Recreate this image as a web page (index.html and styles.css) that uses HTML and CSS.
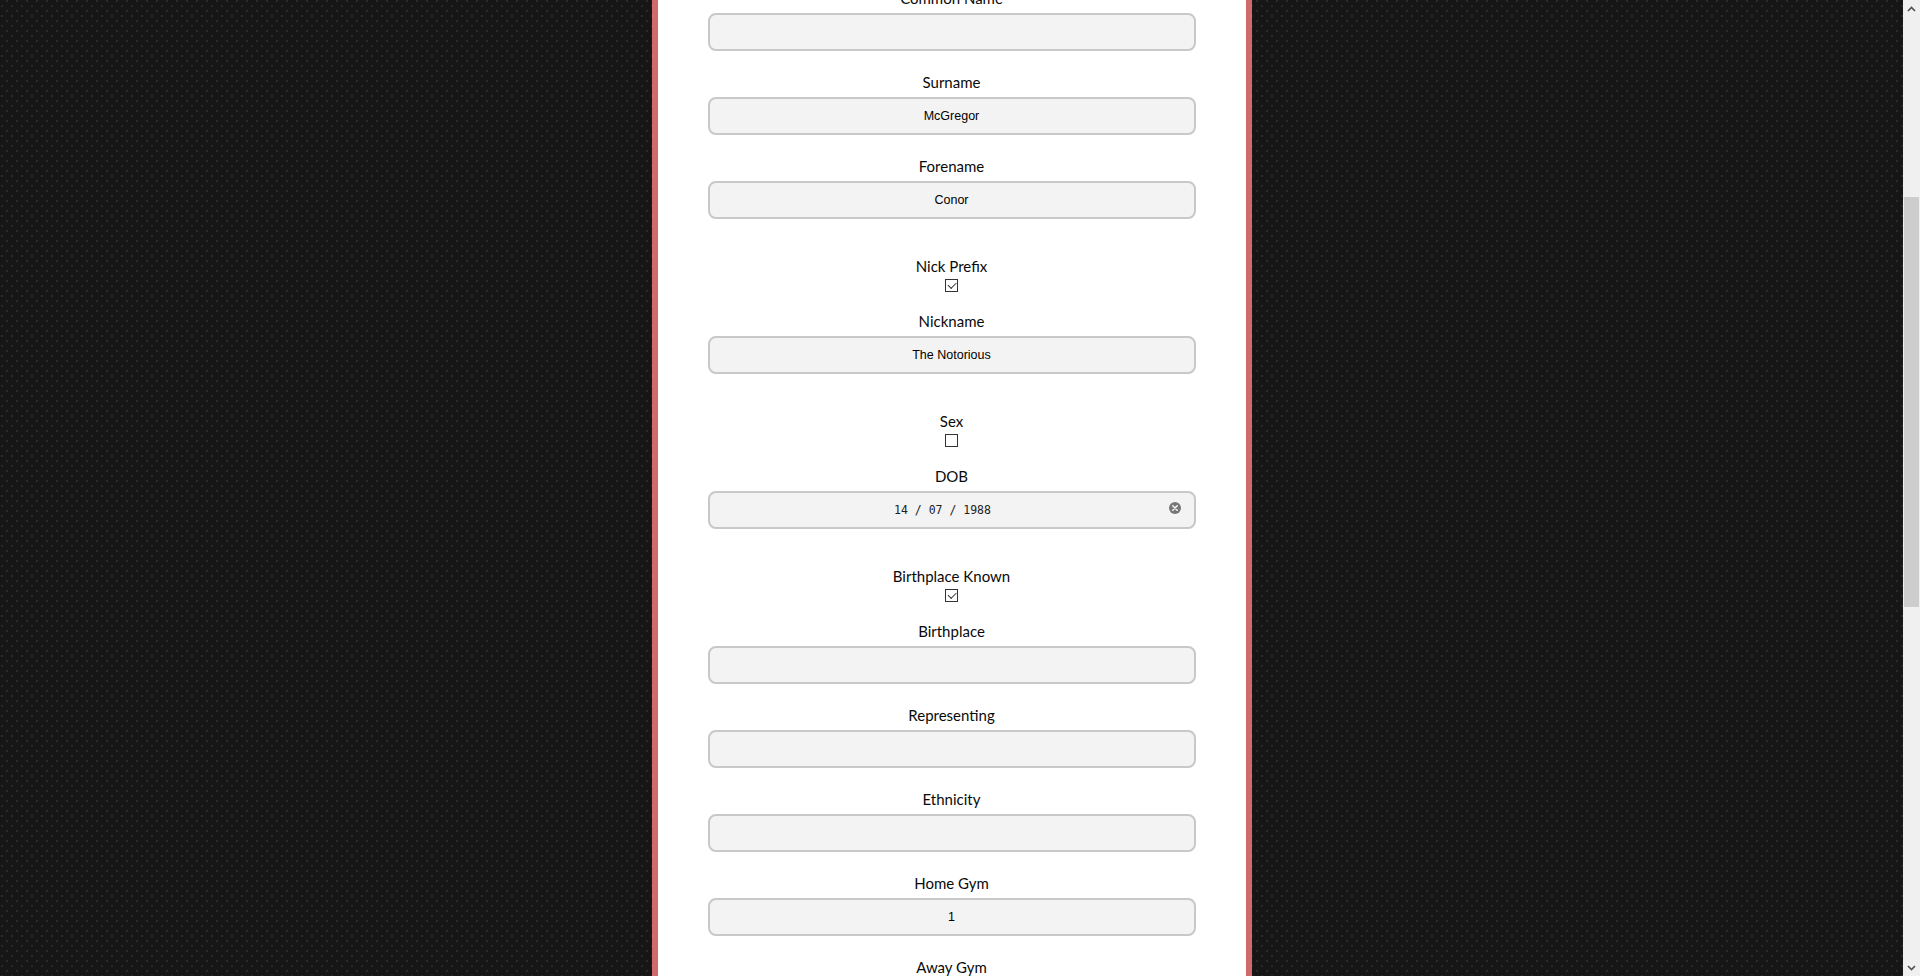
FILE: index.html
```html
<!DOCTYPE html>
<html lang="en">
<head>
<meta charset="utf-8">
<title>Edit Fighter</title>
<link rel="stylesheet" href="styles.css">
</head>
<body>
<main class="panel">
  <h2 class="panel-title">Edit Fighter</h2>
  <form class="form">
    <div class="field"><label class="field-label" for="f-id">ID</label><input class="field-input" id="f-id" type="text" value="1"></div>
    <div class="field"><label class="field-label" for="f-full">Full Name</label><input class="field-input" id="f-full" type="text" value="Conor McGregor"></div>
    <div class="field"><label class="field-label" for="f-fight">Fight Name</label><input class="field-input" id="f-fight" type="text"></div>
    <div class="field"><label class="field-label" for="f-short">Short Name</label><input class="field-input" id="f-short" type="text"></div>
    <div class="field"><label class="field-label" for="f-common">Common Name</label><input class="field-input" id="f-common" type="text"></div>
    <div class="field"><label class="field-label" for="f-surname">Surname</label><input class="field-input" id="f-surname" type="text" value="McGregor"></div>
    <div class="field"><label class="field-label" for="f-forename">Forename</label><input class="field-input" id="f-forename" type="text" value="Conor"></div>
    <div class="field field-check"><label class="field-label" for="f-nickprefix">Nick Prefix</label><input class="check-box" id="f-nickprefix" type="checkbox" checked></div>
    <div class="field"><label class="field-label" for="f-nickname">Nickname</label><input class="field-input" id="f-nickname" type="text" value="The Notorious"></div>
    <div class="field field-check"><label class="field-label" for="f-sex">Sex</label><input class="check-box" id="f-sex" type="checkbox"></div>
    <div class="field"><label class="field-label" for="f-dob">DOB</label>
      <div class="date-wrap">
        <input class="field-input date-input" id="f-dob" type="text" value="14 / 07 / 1988">
        <svg class="date-clear" width="12" height="12" viewBox="0 0 12 12" aria-hidden="true"><circle cx="6" cy="6" r="6" fill="#777"/><path d="M3.8 3.8 L8.2 8.2 M8.2 3.8 L3.8 8.2" stroke="#f3f3f3" stroke-width="1.6" stroke-linecap="round"/></svg>
      </div>
    </div>
    <div class="field field-check"><label class="field-label" for="f-bpknown">Birthplace Known</label><input class="check-box" id="f-bpknown" type="checkbox" checked></div>
    <div class="field"><label class="field-label" for="f-birthplace">Birthplace</label><input class="field-input" id="f-birthplace" type="text"></div>
    <div class="field"><label class="field-label" for="f-repr">Representing</label><input class="field-input" id="f-repr" type="text"></div>
    <div class="field"><label class="field-label" for="f-eth">Ethnicity</label><input class="field-input" id="f-eth" type="text"></div>
    <div class="field"><label class="field-label" for="f-home">Home Gym</label><input class="field-input" id="f-home" type="text" value="1"></div>
    <div class="field"><label class="field-label" for="f-away">Away Gym</label><input class="field-input" id="f-away" type="text"></div>
    <div class="field"><label class="field-label" for="f-wc">Weight Class</label><input class="field-input" id="f-wc" type="text"></div>
    <div class="field"><label class="field-label" for="f-height">Height</label><input class="field-input" id="f-height" type="text"></div>
    <div class="field"><label class="field-label" for="f-weight">Weight</label><input class="field-input" id="f-weight" type="text"></div>
    <div class="field"><label class="field-label" for="f-reach">Reach</label><input class="field-input" id="f-reach" type="text"></div>
    <div class="field"><label class="field-label" for="f-stance">Stance</label><input class="field-input" id="f-stance" type="text"></div>
    <div class="field"><label class="field-label" for="f-wins">Wins</label><input class="field-input" id="f-wins" type="text"></div>
    <div class="field"><label class="field-label" for="f-losses">Losses</label><input class="field-input" id="f-losses" type="text"></div>
    <div class="field"><label class="field-label" for="f-draws">Draws</label><input class="field-input" id="f-draws" type="text"></div>
    <div class="actions"><button class="save-btn" type="button">Save</button></div>
  </form>
</main>
<div class="scrollbar" aria-hidden="true">
  <div class="sb-btn"><svg width="9" height="6" viewBox="0 0 9 6"><path d="M1 5 L4.5 1.5 L8 5" fill="none" stroke="#505050" stroke-width="1.6"/></svg></div>
  <div class="sb-track"><div class="sb-thumb"></div></div>
  <div class="sb-btn"><svg width="9" height="6" viewBox="0 0 9 6"><path d="M1 1 L4.5 4.5 L8 1" fill="none" stroke="#505050" stroke-width="1.6"/></svg></div>
</div>
<script src="script.js"></script>
</body>
</html>
```

FILE: styles.css
```css
html {
  background-color: #161616;
  background-image:
    conic-gradient(at 2px 2px, transparent 75%, #2a2a2a 0),
    conic-gradient(at 2px 2px, transparent 75%, #2a2a2a 0);
  background-size: 10px 10px, 10px 10px;
  background-position: 1px 3px, 6px 8px;
}

body {
  margin: 0;
  padding-right: 17px;
  font-family: Lato, "Noto Sans", sans-serif;
  color: #000;
}

.panel {
  box-sizing: border-box;
  width: 600px;
  min-height: 2242px;
  margin: 0 auto;
  padding: 20px 50px 40px;
  background: #fff;
  border-left: 6px solid #d16b6b;
  border-right: 6px solid #d16b6b;
}

.panel-title {
  margin: 0 0 32px;
  height: 28px;
  font-size: 22px;
  line-height: 28px;
  text-align: center;
  font-weight: 700;
}

.form {
  display: flex;
  flex-direction: column;
}

.field {
  display: flex;
  flex-direction: column;
  align-items: center;
  margin-bottom: 21px;
}

.field-check {
  margin-top: 16px;
  margin-bottom: 19px;
}

.field-label {
  height: 20px;
  font-size: 15px;
  line-height: 20px;
  color: #0a0a0a;
}

.field-input {
  box-sizing: border-box;
  width: 100%;
  height: 38px;
  margin: 5px 0 0;
  padding: 0 2px;
  border: 2px solid #c8c8c8;
  border-radius: 8px;
  background: #f3f3f3;
  text-align: center;
  font-family: "Liberation Sans", Arial, sans-serif;
  font-size: 12.5px;
  color: #000;
  outline: none;
}

.check-box {
  appearance: none;
  -webkit-appearance: none;
  position: relative;
  box-sizing: border-box;
  width: 13px;
  height: 13px;
  margin: 3px 0 0;
  border: 1px solid #333;
  border-radius: 0;
  background: #fff;
}

.check-box:checked::after {
  content: "";
  position: absolute;
  left: 1.5px;
  top: 1.5px;
  width: 7px;
  height: 3.5px;
  border-left: 1.3px solid #3a3a3a;
  border-bottom: 1.3px solid #3a3a3a;
  transform: rotate(-45deg);
}

.date-wrap {
  position: relative;
  width: 100%;
}

.date-input {
  display: block;
  padding: 0 20px 0 2px;
  font-family: "DejaVu Sans Mono", "Liberation Mono", monospace;
  font-size: 11.5px;
  color: #222;
}

.date-clear {
  position: absolute;
  right: 15px;
  top: 50%;
  transform: translateY(-50%);
}

.actions {
  display: flex;
  justify-content: center;
  margin-top: 10px;
}

.save-btn {
  padding: 8px 30px;
  border: 2px solid #d16b6b;
  border-radius: 8px;
  background: #fff;
  font-family: Lato, sans-serif;
  font-size: 15px;
}

.scrollbar {
  position: fixed;
  top: 0;
  right: 0;
  width: 17px;
  height: 100vh;
  display: flex;
  flex-direction: column;
  background: #f0f0f0;
}

.sb-btn {
  height: 17px;
  flex: none;
  display: flex;
  align-items: center;
  justify-content: center;
}

.sb-track {
  flex: 1;
  padding-top: 180px;
}

.sb-thumb {
  height: 410px;
  margin: 0 1px;
  background: #cdcdcd;
}
```

FILE: script.js
```js
window.scrollTo(0, 428);
```
